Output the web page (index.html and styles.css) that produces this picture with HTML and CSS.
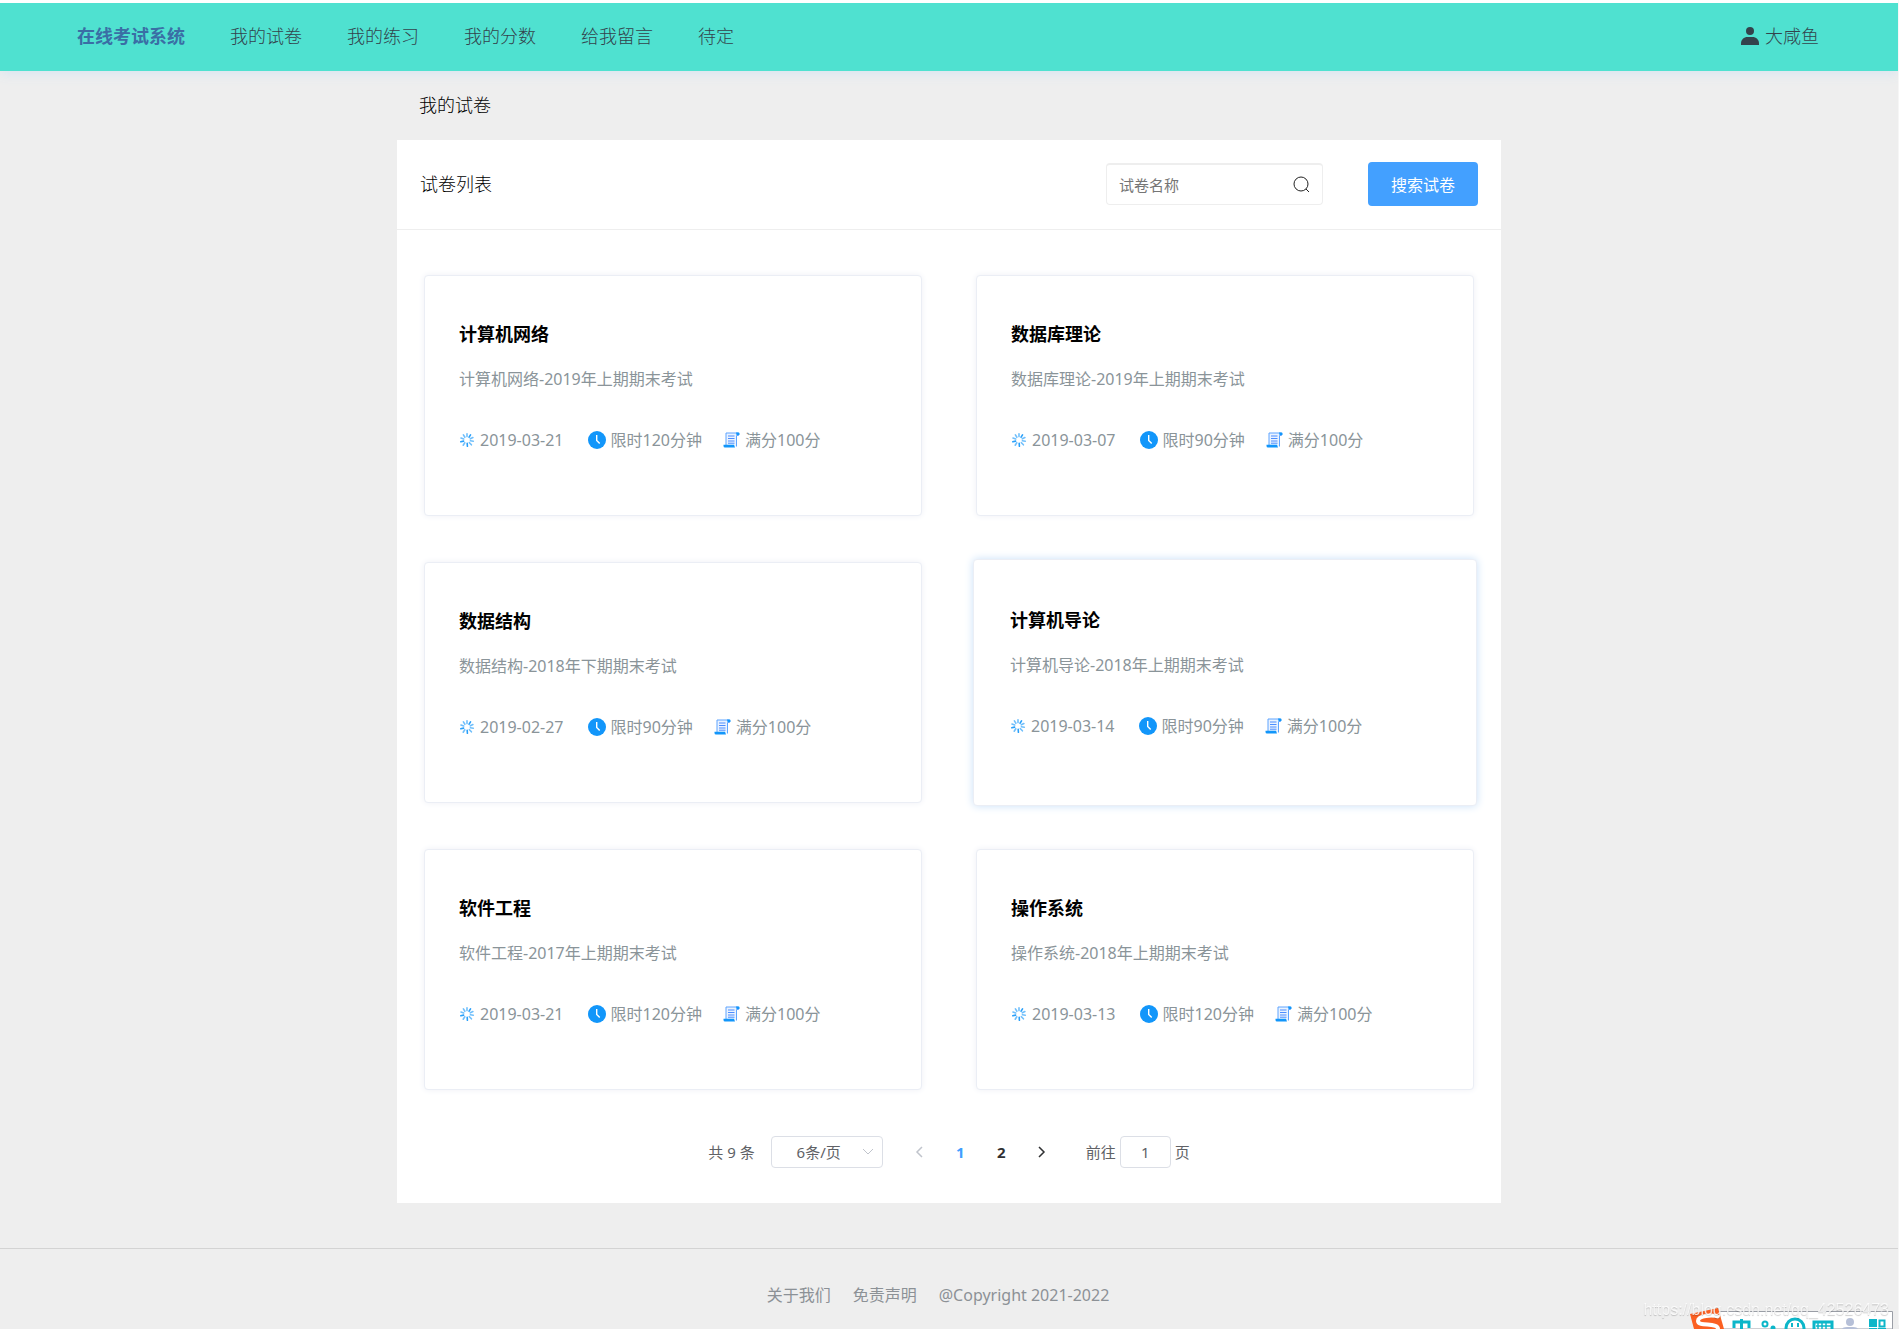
FILE: index.html
```html
<!DOCTYPE html>
<html lang="zh-CN">
<head>
  <meta charset="UTF-8">
  <meta name="viewport" content="width=device-width, initial-scale=1.0">
  <title>在线考试系统</title>
  <link rel="stylesheet" href="styles.css">
</head>
<body>

  <!-- shared icons -->
  <svg class="sprite" aria-hidden="true">
    <symbol id="i-load" viewBox="0 0 14 14">
      <g stroke="#1296fa" stroke-width="1.6" stroke-linecap="round">
        <path d="M7 .8v2.8" opacity=".6"/>
        <path d="M10.5 1.9 9.1 4.2" opacity=".9"/>
        <path d="M12.9 4.6 10.3 5.8" opacity=".6"/>
        <path d="M13.3 8.2 10.4 7.8" opacity=".6"/>
        <path d="M11.4 11.8 9.4 9.7" opacity=".6"/>
        <path d="M7.4 13.3 7.2 10.4" opacity=".9"/>
        <path d="M3.2 12.2 4.8 9.8" opacity=".6"/>
        <path d="M.8 8.8 3.6 8.1" opacity=".9"/>
        <path d="M1 5 3.7 6" opacity=".6"/>
        <path d="M3.4 1.9 4.9 4.2" opacity=".6"/>
      </g>
    </symbol>
    <symbol id="i-clock" viewBox="0 0 18 18">
      <circle cx="9" cy="9" r="9" fill="#1296fa"/>
      <path d="M8.7 4v5.4l3 3" fill="none" stroke="#fff" stroke-width="1.4"/>
    </symbol>
    <symbol id="i-paper" viewBox="0 0 17 16">
      <path d="M3 13V1h12.500v2.500h-2V14.500" fill="#eaf3ff" stroke="#5ea4ff" stroke-width="1"/>
      <path d="M13 .5h2.500a1 1 0 0 1 1 1V3H13.500z" fill="#1296fa"/>
      <path d="M5 4h6.500M5 6.500h6.500M5 9h6.500M5 11.200h6.500" stroke="#4c8dff" stroke-width="1"/>
      <path d="M.5 12.800h10.500l1 2.700H2a1.500 1.500 0 0 1-1.500-1.500z" fill="#1296fa"/>
    </symbol>
  </svg>

  <header class="navbar">
    <a class="brand" href="#">在线考试系统</a>
    <nav class="menu">
      <a href="#">我的试卷</a>
      <a href="#">我的练习</a>
      <a href="#">我的分数</a>
      <a href="#">给我留言</a>
      <a href="#">待定</a>
    </nav>
    <a class="user" href="#">
      <svg width="18" height="18" viewBox="0 0 18 18" fill="#33434c"><circle cx="9" cy="4" r="4"/><path d="M0 18v-1.500C0 12.500 3 10 6.500 10h5c3.500 0 6.500 2.500 6.500 6.500V18z"/></svg>
      大咸鱼
    </a>
  </header>

  <main class="container">
    <h1 class="page-title">我的试卷</h1>

    <section class="panel">
      <div class="panel-head">
        <h2>试卷列表</h2>
        <form class="search">
          <label class="search-box">
            <input type="text" placeholder="试卷名称" aria-label="试卷名称">
            <svg width="17" height="17" viewBox="0 0 17 17" fill="none" stroke="#222"><circle cx="8" cy="8" r="7"/><path d="M13 13l3 3"/></svg>
          </label>
          <button type="button">搜索试卷</button>
        </form>
      </div>

      <div class="papers">
        <article class="card">
          <h3>计算机网络</h3>
          <p>计算机网络-2019年上期期末考试</p>
          <ul class="info">
            <li class="date"><svg class="load"><use href="#i-load"/></svg>2019-03-21</li>
            <li><svg class="clock"><use href="#i-clock"/></svg>限时120分钟</li>
            <li><svg class="paper"><use href="#i-paper"/></svg>满分100分</li>
          </ul>
        </article>
        <article class="card">
          <h3>数据库理论</h3>
          <p>数据库理论-2019年上期期末考试</p>
          <ul class="info">
            <li class="date"><svg class="load"><use href="#i-load"/></svg>2019-03-07</li>
            <li><svg class="clock"><use href="#i-clock"/></svg>限时90分钟</li>
            <li><svg class="paper"><use href="#i-paper"/></svg>满分100分</li>
          </ul>
        </article>
        <article class="card">
          <h3>数据结构</h3>
          <p>数据结构-2018年下期期末考试</p>
          <ul class="info">
            <li class="date"><svg class="load"><use href="#i-load"/></svg>2019-02-27</li>
            <li><svg class="clock"><use href="#i-clock"/></svg>限时90分钟</li>
            <li><svg class="paper"><use href="#i-paper"/></svg>满分100分</li>
          </ul>
        </article>
        <article class="card active">
          <h3>计算机导论</h3>
          <p>计算机导论-2018年上期期末考试</p>
          <ul class="info">
            <li class="date"><svg class="load"><use href="#i-load"/></svg>2019-03-14</li>
            <li><svg class="clock"><use href="#i-clock"/></svg>限时90分钟</li>
            <li><svg class="paper"><use href="#i-paper"/></svg>满分100分</li>
          </ul>
        </article>
        <article class="card">
          <h3>软件工程</h3>
          <p>软件工程-2017年上期期末考试</p>
          <ul class="info">
            <li class="date"><svg class="load"><use href="#i-load"/></svg>2019-03-21</li>
            <li><svg class="clock"><use href="#i-clock"/></svg>限时120分钟</li>
            <li><svg class="paper"><use href="#i-paper"/></svg>满分100分</li>
          </ul>
        </article>
        <article class="card">
          <h3>操作系统</h3>
          <p>操作系统-2018年上期期末考试</p>
          <ul class="info">
            <li class="date"><svg class="load"><use href="#i-load"/></svg>2019-03-13</li>
            <li><svg class="clock"><use href="#i-clock"/></svg>限时120分钟</li>
            <li><svg class="paper"><use href="#i-paper"/></svg>满分100分</li>
          </ul>
        </article>
      </div>

      <div class="pagination">
        <span>共 9 条</span>
        <span class="size">
          <select aria-label="每页条数"><option>6条/页</option></select>
          <svg width="12" height="8" viewBox="0 0 12 8" fill="none" stroke="#c0c4cc"><path d="M1 1l5 5 5-5"/></svg>
        </span>
        <div class="pager">
          <button type="button" aria-label="上一页" disabled><svg width="8" height="12" viewBox="0 0 8 12" fill="none" stroke="#c0c4cc" stroke-width="1.500"><path d="M7 1L2 6l5 5"/></svg></button>
          <button type="button" class="current">1</button>
          <button type="button">2</button>
          <button type="button" aria-label="下一页"><svg width="8" height="12" viewBox="0 0 8 12" fill="none" stroke="#303133" stroke-width="1.500"><path d="M1 1l5 5-5 5"/></svg></button>
        </div>
        <label class="jump">前往 <input type="text" value="1"> 页</label>
      </div>
    </section>
  </main>

  <footer class="footer">
    <a href="#">关于我们</a>
    <a href="#">免责声明</a>
    <span>@Copyright 2021-2022</span>
  </footer>

  <!-- input method bar, runs off the bottom edge -->
  <div class="ime">
    <svg width="204" height="21" viewBox="0 0 204 21">
      <path d="M20 3.500h182.500V21H20z" fill="#fff" stroke="#9a9ea6"/>
      <path d="M0 6 28 0l6 21H4z" fill="#fb6022"/>
      <path d="M29 9C22 6 8 8 8 13c0 6 20 1 20 8" fill="none" stroke="#fff" stroke-width="4"/>
      <g fill="none" stroke="#0cb6c9" stroke-width="3">
        <path d="M44 20v-6h15v6M51.500 11v10"/>
        <circle cx="75" cy="16" r="2.500" stroke-width="2"/>
        <circle cx="105" cy="20" r="9"/>
        <path d="M102 15v4M108 15v4" stroke-width="2"/>
        <path d="M124 21v-7h18v7" />
        <path d="M126 18h15M128 15v6M132 15v6M136 15v6" stroke-width="1.500"/>
        <path d="M189.500 12.500h5v6h-5z" stroke-width="2"/>
      </g>
      <circle cx="83" cy="20" r="2.500" fill="#0cb6c9"/>
      <circle cx="160" cy="14" r="4" fill="#b6c0d8"/>
      <path d="M152 21c1-2 4-2 8-2s7 0 8 2z" fill="#b6c0d8"/>
      <path d="M179 11h8v8h-8zM179 20h8v1h-8zM188 20h8v1h-8z" fill="#0cb6c9"/>
    </svg>
  </div>
  <div class="watermark">https://blog.csdn.net/qq_42526473</div>

</body>
</html>
```
FILE: styles.css
```css
* { box-sizing: border-box; }
body {
  margin: 0;
  border-right: 1px solid #f6f6f6;
  background: #eee;
  color: #000;
  font-family: "Noto Sans", "Noto Sans CJK SC", sans-serif;
  font-size: 16px;
  line-height: 24px;
}
h1, h2, h3, p, ul { margin: 0; padding: 0; }
h1, h2 { font-size: 18px; font-weight: 300; }
a { color: inherit; text-decoration: none; }
button, input, select { font-family: inherit; }
.sprite { display: none; }

/* top bar */
.navbar {
  display: flex;
  align-items: center;
  gap: 45px;
  height: 71px;
  padding: 0 79px 2px 77px;
  border-top: 3px solid #fff;
  background: #4fe1d0;
  box-shadow: 0 2px 12px #d5e4f2;
  color: #33434c;
  font-size: 18px;
  font-weight: 300;
}
.brand { color: #3a6ea5; font-weight: bold; }
.menu { display: flex; gap: 45px; }
.user {
  display: flex;
  align-items: center;
  gap: 6px;
  margin-left: auto;
}

.container {
  width: 100%;
  max-width: 1104px;
  margin: 0 auto;
}
.page-title {
  padding: 22px;
  line-height: 25px;
}
.panel { background: #fff; }
.panel-head {
  display: flex;
  align-items: center;
  justify-content: space-between;
  padding: 22px 23px 23px;
  border-bottom: 1px solid #eee;
}
.search {
  display: flex;
  align-items: center;
  gap: 45px;
}
.search-box {
  display: flex;
  align-items: center;
  width: 217px;
  height: 42px;
  padding: 0 12px;
  border: 1px solid #eee;
  border-top-width: 2px;
  border-radius: 4px;
}
.search-box input {
  flex: 1;
  min-width: 0;
  padding: 0;
  border: 0;
  outline: 0;
  font-size: 15px;
}
.search-box input::placeholder { color: #757575; }
.search button {
  width: 110px;
  height: 44px;
  padding: 0;
  border: 0;
  border-radius: 4px;
  background: #43a0ff;
  color: #fff;
  font-size: 16px;
}

/* paper cards */
.papers {
  display: grid;
  grid-template-columns: 1fr 1fr;
  gap: 46px 54px;
  padding: 45px 27px 46px;
}
.card {
  padding: 44px 34px 63px;
  border: 1px solid #ebeef5;
  border-radius: 4px;
  background: #fff;
  box-shadow: 0 0 6px #eef0f6;
}
.card.active {
  margin: -3px;
  padding: 46px 36px 66px;
  box-shadow: 0 0 8px #c9e0f8;
}
.card h3 {
  font-size: 18px;
  line-height: 28px;
}
.card p {
  margin-top: 19px;
  color: #8a9499;
}
.info {
  display: flex;
  gap: 21px;
  margin-top: 37px;
  color: #8a9499;
  list-style: none;
}
.info li {
  display: flex;
  align-items: center;
  gap: 5px;
}
.info .date { padding-right: 3px; }
.load { width: 16px; height: 14px; }
.clock { width: 18px; height: 18px; }
.paper { width: 17px; height: 16px; }

.pagination {
  display: flex;
  align-items: center;
  justify-content: center;
  gap: 16px;
  padding: 0 0 35px;
  color: #606266;
  font-size: 15px;
}
.size {
  display: flex;
  align-items: center;
  width: 112px;
  height: 32px;
  padding-right: 8px;
  border: 1px solid #dcdfe6;
  border-radius: 4px;
}
.size select {
  flex: 1;
  padding: 0 0 0 4px;
  border: 0;
  outline: 0;
  background: none;
  color: #606266;
  font-size: 15px;
  text-align: center;
  appearance: none;
}
.pager {
  display: flex;
  align-items: center;
}
.pager button {
  width: 41px;
  padding: 0;
  border: 0;
  background: none;
  color: #303133;
  font-size: 15px;
  font-weight: bold;
}
.pager .current { color: #409eff; }
.jump {
  display: flex;
  align-items: center;
  gap: 4px;
  margin-left: 7px;
}
.jump input {
  width: 51px;
  height: 32px;
  padding: 0;
  border: 1px solid #dcdfe6;
  border-radius: 4px;
  color: #606266;
  font-size: 15px;
  text-align: center;
}

.footer {
  display: flex;
  justify-content: center;
  margin-top: 45px;
  padding: 34px 0 18px;
  border-top: 1px solid #d3d3d3;
  color: #8c9196;
}
.footer a, .footer span { margin-right: 22px; }

.ime {
  position: fixed;
  right: 5px;
  bottom: 0;
}
.ime svg { display: block; }
.watermark {
  position: fixed;
  right: 10px;
  bottom: 7px;
  color: rgba(255, 255, 255, 0.8);
  font-family: "Liberation Sans", sans-serif;
  font-size: 16px;
  text-shadow: 0 1px 1px rgba(0, 0, 0, 0.2);
}
```
